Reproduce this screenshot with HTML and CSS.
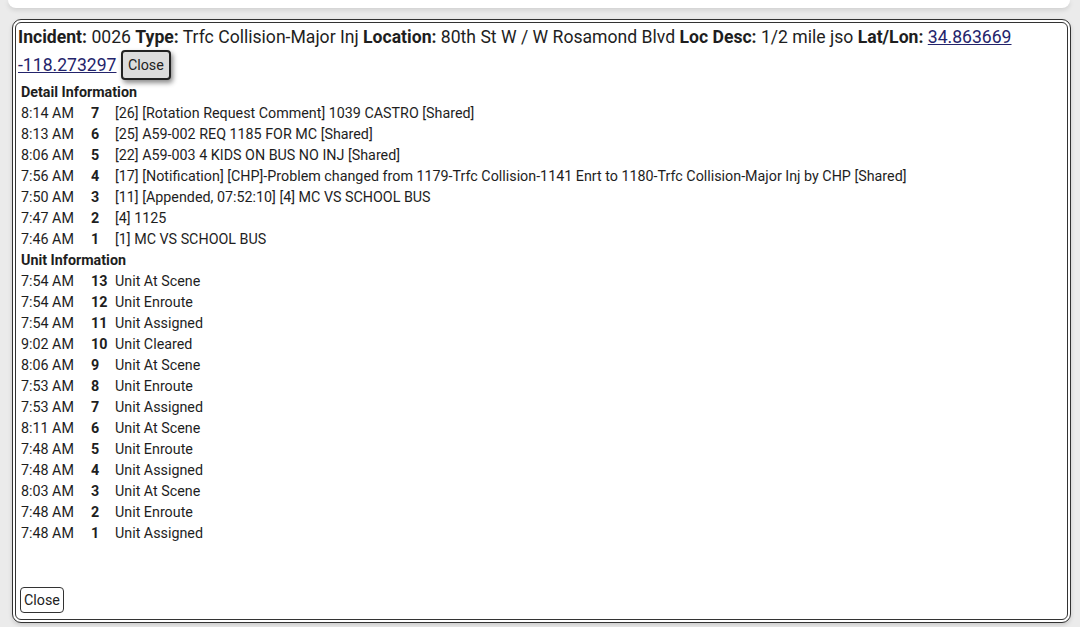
FILE: index.html
```html
<!DOCTYPE html>
<html>
<head>
<meta charset="utf-8">
<link rel="stylesheet" href="styles.css">
</head>
<body>
<div class="topcard"></div>
<div class="dialog">
  <div class="header">
    <b>Incident:</b> 0026 <b>Type:</b> Trfc Collision-Major Inj <b>Location:</b> 80th St W / W Rosamond Blvd <b>Loc Desc:</b> 1/2 mile jso <b>Lat/Lon:</b> <a href="#">34.863669 -118.273297</a> <button class="btn-top">Close</button>
  </div>
  <table class="info">
    <tr><th colspan="3">Detail Information</th></tr>
    <tr><td class="t">8:14 AM</td><td class="n">7</td><td>[26] [Rotation Request Comment] 1039 CASTRO [Shared]</td></tr>
    <tr><td class="t">8:13 AM</td><td class="n">6</td><td>[25] A59-002 REQ 1185 FOR MC [Shared]</td></tr>
    <tr><td class="t">8:06 AM</td><td class="n">5</td><td>[22] A59-003 4 KIDS ON BUS NO INJ [Shared]</td></tr>
    <tr><td class="t">7:56 AM</td><td class="n">4</td><td>[17] [Notification] [CHP]-Problem changed from 1179-Trfc Collision-1141 Enrt to 1180-Trfc Collision-Major Inj by CHP [Shared]</td></tr>
    <tr><td class="t">7:50 AM</td><td class="n">3</td><td>[11] [Appended, 07:52:10] [4] MC VS SCHOOL BUS</td></tr>
    <tr><td class="t">7:47 AM</td><td class="n">2</td><td>[4] 1125</td></tr>
    <tr><td class="t">7:46 AM</td><td class="n">1</td><td>[1] MC VS SCHOOL BUS</td></tr>
    <tr><th colspan="3">Unit Information</th></tr>
    <tr><td class="t">7:54 AM</td><td class="n">13</td><td>Unit At Scene</td></tr>
    <tr><td class="t">7:54 AM</td><td class="n">12</td><td>Unit Enroute</td></tr>
    <tr><td class="t">7:54 AM</td><td class="n">11</td><td>Unit Assigned</td></tr>
    <tr><td class="t">9:02 AM</td><td class="n">10</td><td>Unit Cleared</td></tr>
    <tr><td class="t">8:06 AM</td><td class="n">9</td><td>Unit At Scene</td></tr>
    <tr><td class="t">7:53 AM</td><td class="n">8</td><td>Unit Enroute</td></tr>
    <tr><td class="t">7:53 AM</td><td class="n">7</td><td>Unit Assigned</td></tr>
    <tr><td class="t">8:11 AM</td><td class="n">6</td><td>Unit At Scene</td></tr>
    <tr><td class="t">7:48 AM</td><td class="n">5</td><td>Unit Enroute</td></tr>
    <tr><td class="t">7:48 AM</td><td class="n">4</td><td>Unit Assigned</td></tr>
    <tr><td class="t">8:03 AM</td><td class="n">3</td><td>Unit At Scene</td></tr>
    <tr><td class="t">7:48 AM</td><td class="n">2</td><td>Unit Enroute</td></tr>
    <tr><td class="t">7:48 AM</td><td class="n">1</td><td>Unit Assigned</td></tr>
  </table>
  <div class="footer"><button class="btn-bottom">Close</button></div>
</div>
</body>
</html>
```
FILE: styles.css
```css
html, body {
  margin: 0;
  padding: 0;
}
body {
  background: #ebebeb;
  font-family: Roboto, "Liberation Sans", sans-serif;
  color: #1e1e1e;
  width: 1080px;
  height: 627px;
  overflow: hidden;
}
.topcard {
  height: 8px;
  margin: 0 10px 0 8px;
  background: #fff;
  border-radius: 0 0 12px 12px;
  box-shadow: 0 2px 5px rgba(0,0,0,0.12);
}
.dialog {
  margin: 11px 9px 0 12px;
  height: 604px;
  box-sizing: border-box;
  border: 4px double #333;
  border-radius: 9px;
  background: #fff;
  padding: 2px 2px 6px 2px;
  display: flex;
  flex-direction: column;
  box-shadow: 0 2px 4px rgba(0,0,0,0.15);
}
.header {
  font-size: 17.6px;
  line-height: 25px;
}
.header b {
  font-weight: 700;
}
.header a {
  color: #24246b;
  text-decoration: underline;
}
.btn-top {
  font-family: Roboto, "Liberation Sans", sans-serif;
  font-size: 14.3px;
  background: #dcdcdc;
  color: #222;
  border: 2px solid #222;
  border-radius: 4px;
  padding: 5px 5px;
  box-shadow: 2px 3px 5px rgba(0,0,0,0.45);
  vertical-align: 1px;
}
.info {
  font-size: 14.3px;
  border-spacing: 2px;
  margin-top: 1px;
}
.info th {
  text-align: left;
  font-weight: 700;
  padding: 1px;
  line-height: 17px;
}
.info td {
  padding: 1px;
  line-height: 17px;
  white-space: nowrap;
}
.info td.t {
  width: 66px;
}
.info td.n {
  width: 20px;
  font-weight: 700;
}
.footer {
  margin-top: auto;
}
.btn-bottom {
  font-family: Roboto, "Liberation Sans", sans-serif;
  font-size: 14.3px;
  background: #fff;
  color: #222;
  border: 1px solid #333;
  border-radius: 4px;
  padding: 4px 3px;
  margin-left: 2px;
}
```
